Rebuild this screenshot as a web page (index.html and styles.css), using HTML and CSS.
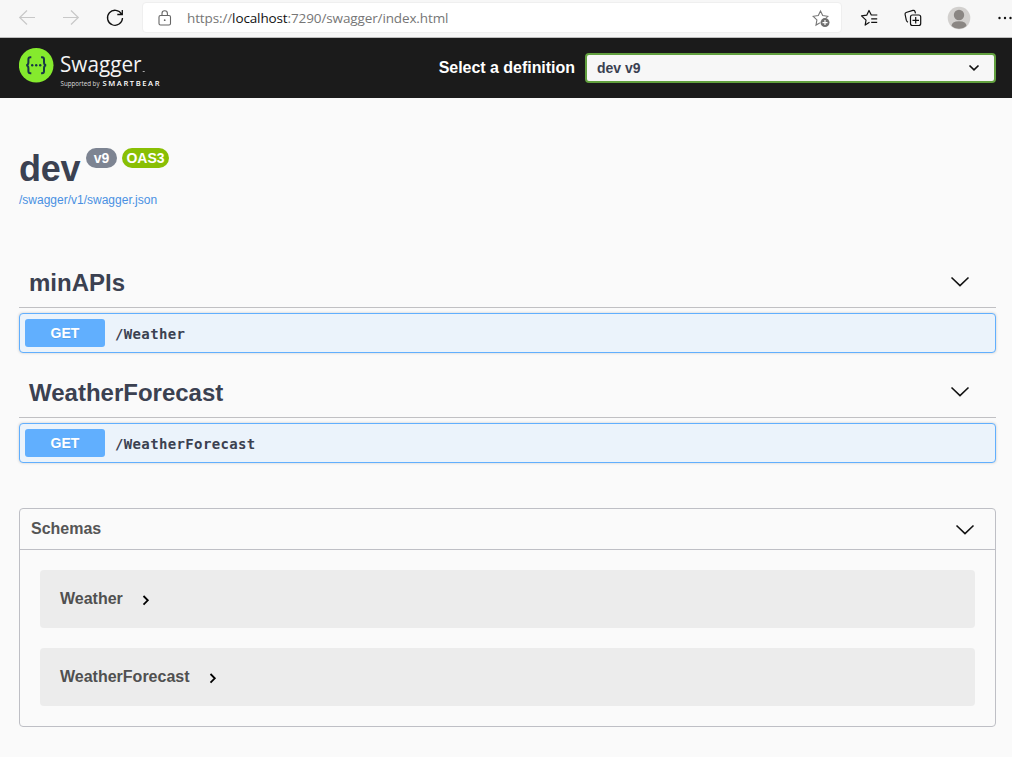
FILE: index.html
```html
<!DOCTYPE html>
<html lang="en">
<head>
<meta charset="utf-8">
<title>Swagger UI</title>
<link rel="stylesheet" href="styles.css">
</head>
<body>
<div class="browser">
  <svg class="nav-icons" width="142" height="37" viewBox="0 0 142 37" fill="none">
    <g stroke="#c8c8c8" stroke-width="1.2"><path d="M35 17.5H20M27 10.5l-7.3 7 7.3 7"/><path d="M63 17.5h15M71 10.5l7.3 7-7.3 7"/></g>
    <path d="M121.6 14.2a7.5 7.5 0 1 0 .9 3.8M122.3 10v4.5h-5" stroke="#111" stroke-width="1.3"/>
  </svg>
  <div class="address">
    <svg class="lock" width="14" height="17" viewBox="0 0 14 17" fill="none" stroke="#666" stroke-width="1.1"><rect x="1" y="5.5" width="11.5" height="9.5" rx="1.5"/><path d="M4 5.500V3.500a2.700 2.700 0 0 1 5.400 0V5.500"/><circle cx="6.700" cy="10.200" r=".9" fill="#666" stroke="none"/></svg>
    <span class="url">https://<b>localhost</b>:7290/swagger/index.html</span>
    <svg class="star" width="20" height="20" viewBox="0 0 20 20"><path d="M8.500 2l2.200 4.600 5.100.7-3.700 3.600.8 5.100-4.500-2.400L4 16.100l.9-5.200-3.700-3.600 5.100-.7z" fill="none" stroke="#777" stroke-width="1.1"/><circle cx="13" cy="13.600" r="5.200" fill="#fff"/><circle cx="13" cy="13.600" r="4.500" fill="#6e6e6e"/><path d="M10.500 13.600h5M13 11.100v5" stroke="#fff" stroke-width="1.200"/></svg>
  </div>
  <svg class="tools" width="170" height="37" viewBox="842 0 170 37" fill="none">
    <path d="M869.500 22.300l-4.300 2.800.8-5-4.500-4.200 5.200-.7 2.300-4.700 2.300 4.500h6M871.200 18.900h6M871.200 22.400h6" stroke="#111" stroke-width="1.200" stroke-linejoin="round"/>
    <g stroke="#111" stroke-width="1.200"><path d="M908 22.200q-1.300-.5-1.700-2l-1.200-5.700q-.3-1.500 1-2l6.800-2.100q1.500-.4 2 .9l.6 2"/><rect x="910.500" y="15" width="10.200" height="10.500" rx="2"/><path d="M912.500 20.300h6.500M915.700 17v6.500"/></g>
    <circle cx="959" cy="18" r="11.300" fill="#d2d0ce"/><circle cx="959" cy="15" r="5.200" fill="#8a8683"/><path d="M951.500 26q0-4.800 7.500-4.800t7.500 4.800a11.300 11.300 0 0 1-15 0z" fill="#8a8683"/>
    <g fill="#111"><circle cx="999.500" cy="18" r="1.200"/><circle cx="1005" cy="18" r="1.200"/><circle cx="1010.500" cy="18" r="1.200"/></g>
  </svg>
</div>
<header class="topbar">
  <svg class="logo" width="150" height="60" viewBox="19 38 150 60">
    <circle cx="36.200" cy="65.300" r="17.300" fill="#85ea2d"/>
    <g fill="none" stroke="#173647" stroke-width="2"><path d="M31.300 57.300h-1q-1.900 0-1.900 2v3q0 2.700-2.100 3 2.100.3 2.100 3v3q0 2 1.900 2h1"/><path d="M41.100 57.300h1q1.900 0 1.900 2v3q0 2.700 2.100 3-2.100.3-2.100 3v3q0 2-1.900 2h-1"/></g>
    <g fill="#173647"><circle cx="32.200" cy="65.300" r="1.200"/><circle cx="36.200" cy="65.300" r="1.200"/><circle cx="40.200" cy="65.300" r="1.200"/></g>
    <text class="logo-name" x="60" y="72.300" textLength="81.500" lengthAdjust="spacingAndGlyphs">Swagger</text>
    <rect x="142.700" y="71" width="2" height="1" fill="#aaa"/>
    <text class="logo-by" x="60.500" y="86.200" textLength="39" lengthAdjust="spacingAndGlyphs">Supported by</text>
    <text class="logo-brand" x="102.500" y="86.200" textLength="57">SMARTBEAR</text>
  </svg>
  <label class="definition">Select a definition</label>
  <div class="select"><span>dev v9</span><svg width="12" height="8" viewBox="0 0 12 8"><path d="M1.500 1.500L6 5.800l4.500-4.300" fill="none" stroke="#111" stroke-width="1.700"/></svg></div>
</header>
<main class="page">
  <div class="heading"><h1>dev</h1><span class="badge version">v9</span><span class="badge oas">OAS3</span></div>
  <a class="spec">/swagger/v1/swagger.json</a>
  <section class="tag first">
    <div class="tag-head"><h2>minAPIs</h2><svg class="arrow" width="20" height="12" viewBox="0 0 20 12"><path d="M1.500 1.500L10 9.700l8.500-8.200"/></svg></div>
    <div class="operation"><span class="method">GET</span><span class="path">/Weather</span></div>
  </section>
  <section class="tag">
    <div class="tag-head"><h2>WeatherForecast</h2><svg class="arrow" width="20" height="12" viewBox="0 0 20 12"><path d="M1.500 1.500L10 9.700l8.500-8.200"/></svg></div>
    <div class="operation"><span class="method">GET</span><span class="path">/WeatherForecast</span></div>
  </section>
  <section class="schemas">
    <div class="schemas-head"><span>Schemas</span><svg class="arrow" width="20" height="12" viewBox="0 0 20 12"><path d="M1.500 1.500L10 9.700l8.500-8.200"/></svg></div>
    <div class="models">
      <div class="model"><span>Weather</span><svg width="8" height="12" viewBox="0 0 8 12"><path d="M1.500 2L5.800 6.300l-4.300 4.300"/></svg></div>
      <div class="model"><span>WeatherForecast</span><svg width="8" height="12" viewBox="0 0 8 12"><path d="M1.500 2L5.800 6.300l-4.300 4.300"/></svg></div>
    </div>
  </section>
</main>
</body>
</html>
```

FILE: styles.css
```css
* { box-sizing: border-box; }
body { margin: 0; background: #fafafa; color: #3b4151; font-family: "Liberation Sans", Arial, sans-serif; overflow: hidden; }
svg { display: block; flex: none; }
h1, h2 { margin: 0; }
.browser { height: 38px; display: flex; background: #f7f7f7; border-bottom: 1px solid #bdbdbd; }
.address { width: 700px; height: 31px; margin-top: 2px; padding: 0 9px 0 15px; display: flex; align-items: center; background: #fff; border: 1px solid #efefef; border-radius: 4px; }
.star { margin-top: 2px; }
.lock { margin-top: 1px; }
.url { margin-left: 15px; flex: 1; font: 13.5px/20px "Open Sans", "Noto Sans", sans-serif; color: #767676; letter-spacing: -0.12px; white-space: nowrap; }
.url b { font-weight: 400; color: #111; }
.topbar { height: 60px; padding: 0 16px 0 19px; display: flex; align-items: center; background: #1b1b1b; }
.logo-name { font: 400 22.5px "Open Sans", sans-serif; fill: #f4f4f4; }
.logo-by { font: 6.5px "Open Sans", sans-serif; fill: #ddd; }
.logo-brand { font: 600 7.6px "Open Sans", sans-serif; fill: #fff; }
.definition { margin-left: auto; margin-right: 10px; color: #fff; font-size: 16px; font-weight: 700; letter-spacing: -0.03px; }
.select { width: 411px; height: 30px; padding: 0 14px 0 10px; display: flex; align-items: center; justify-content: space-between; border: 2px solid #62a03f; border-radius: 4px; background: #f7f7f7; font-size: 14px; font-weight: 700; }
.page { padding: 50px 16px 0 19px; }
.heading { height: 42px; display: flex; align-items: flex-start; }
h1 { width: 67px; font-size: 36px; line-height: 41px; letter-spacing: -0.2px; }
.badge { height: 20px; border-radius: 10px; color: #fff; font-size: 14px; line-height: 20px; font-weight: 700; text-align: center; }
.version { width: 31px; margin-right: 5px; background: #7d8492; }
.oas { width: 47px; background: #89bf04; }
.spec { display: block; height: 18px; margin-top: 1px; font-size: 12px; line-height: 18px; color: #4990e2; }
.tag { height: 110px; }
.first { margin-top: 49px; }
.tag-head { height: 50px; padding: 0 26px 0 10px; display: flex; align-items: center; justify-content: space-between; border-bottom: 1px solid #c0c0c3; }
h2 { font-size: 24px; line-height: 28px; }
.tag-head .arrow { margin-bottom: 1px; }
.schemas-head .arrow { margin-top: 1px; }
.arrow path { fill: none; stroke: #111; stroke-width: 1.6; }
.operation { height: 40px; margin-top: 5px; padding: 5px; display: flex; align-items: center; border: 1px solid #61affe; border-radius: 4px; background: #ebf3fb; box-shadow: 0 0 3px rgba(0,0,0,.19); }
.method { width: 80px; height: 28px; border-radius: 3px; background: #61affe; color: #fff; font-size: 14px; line-height: 28px; font-weight: 700; text-align: center; text-shadow: 0 1px 0 rgba(0,0,0,.1); }
.path { margin: 2px 0 0 10px; font: 700 14px/20px "DejaVu Sans Mono", monospace; letter-spacing: 0.36px; }
.schemas { height: 219px; margin-top: 30px; border: 1px solid #bebfc5; border-radius: 4px; color: #555; font-size: 16px; font-weight: 700; }
.schemas-head { height: 41px; padding: 0 20px 0 11px; display: flex; align-items: center; justify-content: space-between; border-bottom: 1px solid #bebfc5; }
.models { padding: 20px; display: grid; gap: 20px; }
.model { height: 58px; padding: 0 20px; display: flex; align-items: center; gap: 19px; border-radius: 4px; background: #ececec; color: #505050; }
.model svg { margin-top: 2px; }
.model path { fill: none; stroke: #000; stroke-width: 1.8; }
```
